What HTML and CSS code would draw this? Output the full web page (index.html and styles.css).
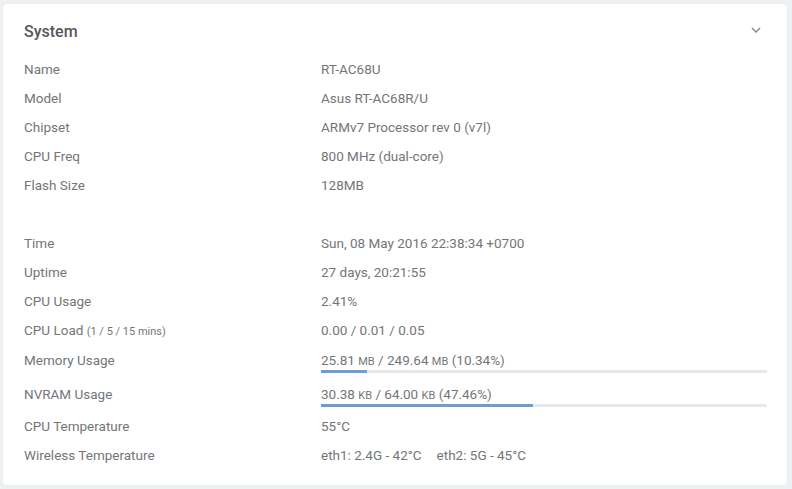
FILE: index.html
```html
<!DOCTYPE html>
<html>
<head>
<meta charset="utf-8">
<link rel="stylesheet" href="styles.css">
</head>
<body>
<div class="card">
  <div class="card-head">
    <h2 class="title">System</h2>
    <svg class="chevron" width="10" height="6" viewBox="0 0 10 6"><path d="M1 1 L5 5 L9 1" fill="none" stroke="#8a8d8f" stroke-width="1.5"/></svg>
  </div>
  <div class="rows">
    <div class="row"><div class="label">Name</div><div class="value">RT-AC68U</div></div>
    <div class="row"><div class="label">Model</div><div class="value">Asus RT-AC68R/U</div></div>
    <div class="row"><div class="label">Chipset</div><div class="value">ARMv7 Processor rev 0 (v7l)</div></div>
    <div class="row"><div class="label">CPU Freq</div><div class="value">800 MHz (dual-core)</div></div>
    <div class="row"><div class="label">Flash Size</div><div class="value">128MB</div></div>
    <div class="row"><div class="label"></div><div class="value"></div></div>
    <div class="row"><div class="label">Time</div><div class="value">Sun, 08 May 2016 22:38:34 +0700</div></div>
    <div class="row"><div class="label">Uptime</div><div class="value">27 days, 20:21:55</div></div>
    <div class="row"><div class="label">CPU Usage</div><div class="value">2.41%</div></div>
    <div class="row"><div class="label">CPU Load <small>(1 / 5 / 15 mins)</small></div><div class="value">0.00 / 0.01 / 0.05</div></div>
    <div class="row row-bar"><div class="label">Memory Usage</div><div class="value"><div class="bar-text">25.81 <small>MB</small> / 249.64 <small>MB</small> (10.34%)</div><div class="bar"><div class="fill" style="width:10.34%"></div></div></div></div>
    <div class="row row-bar"><div class="label">NVRAM Usage</div><div class="value"><div class="bar-text">30.38 <small>KB</small> / 64.00 <small>KB</small> (47.46%)</div><div class="bar"><div class="fill" style="width:47.46%"></div></div></div></div>
    <div class="row"><div class="label">CPU Temperature</div><div class="value">55°C</div></div>
    <div class="row"><div class="label">Wireless Temperature</div><div class="value">eth1: 2.4G - 42°C<span class="gap"></span>eth2: 5G - 45°C</div></div>
  </div>
</div>
</body>
</html>
```

FILE: styles.css
```css
html, body {
  margin: 0;
  padding: 0;
  background: #eef1f1;
}
body {
  padding: 4px 5px 4px 3px;
  font-family: Roboto, "Liberation Sans", sans-serif;
  color: #737679;
}
.card {
  background: #fff;
  border-radius: 3px;
  box-shadow: 0 0 1px rgba(0,0,0,0.12);
  height: 481px;
  box-sizing: border-box;
  padding: 0 20px 16px 21px;
}
.card-head {
  height: 50px;
  box-sizing: border-box;
  padding-top: 4px;
  display: flex;
  align-items: center;
  justify-content: space-between;
}
.title {
  margin: 0;
  font-size: 16px;
  font-weight: 500;
  color: #555759;
}
.chevron {
  margin-right: 6px;
  margin-top: -2px;
}
.row {
  display: flex;
  height: 29px;
  align-items: center;
  font-size: 13.5px;
}
.label {
  width: 297px;
  flex: none;
}
.value {
  flex: 1;
}
small {
  font-size: 11px;
}
.row-bar {
  height: 33.5px;
  align-items: flex-start;
}
.row-bar .label {
  line-height: 32px;
}
.bar-text {
  line-height: 32px;
  height: 26px;
}
.bar {
  height: 3px;
  background: #e6e9ea;
}
.fill {
  height: 100%;
  background: #6b9fcf;
}
.gap {
  display: inline-block;
  width: 15px;
}
```
